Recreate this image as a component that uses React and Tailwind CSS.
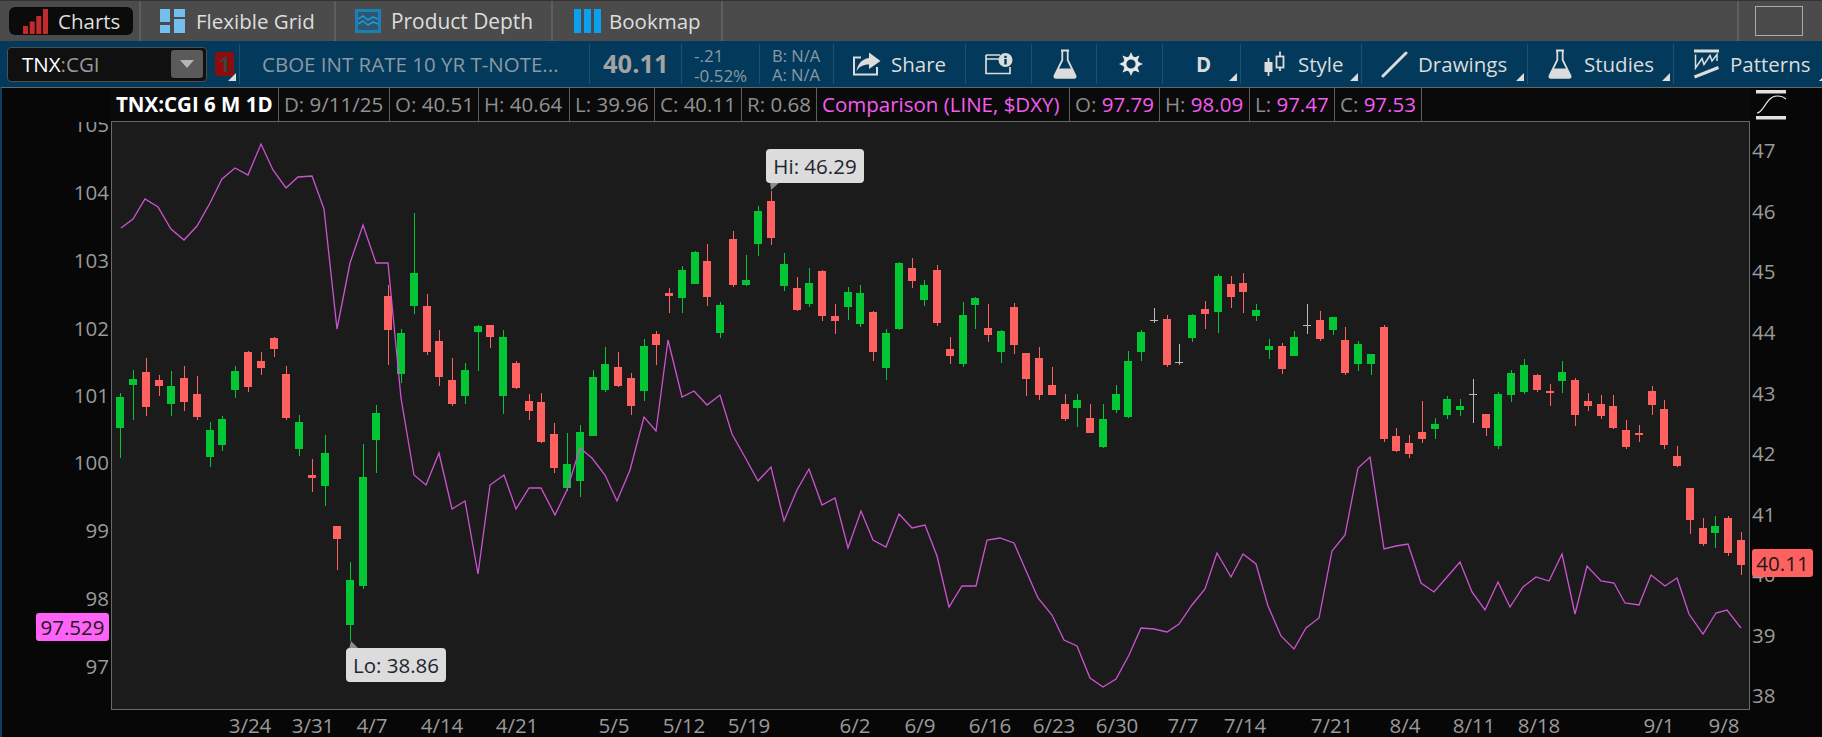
import React from 'react';

// [high, bodyTop, bodyBottom, low, colour]
const candles = [
  [393, 397, 428, 458, 'g'], [370, 379, 385, 420, 'g'], [358, 372, 407, 416, 'r'], [375, 380, 386, 396, 'r'],
  [371, 386, 404, 416, 'g'], [366, 378, 402, 411, 'r'], [376, 394, 417, 420, 'r'], [422, 430, 457, 467, 'g'],
  [416, 419, 445, 451, 'g'], [366, 371, 390, 398, 'g'], [351, 352, 387, 392, 'r'], [352, 361, 368, 375, 'r'],
  [337, 338, 349, 357, 'r'], [366, 374, 418, 420, 'r'], [415, 422, 449, 456, 'g'], [459, 475, 478, 492, 'r'],
  [435, 453, 486, 506, 'g'], [526, 526, 539, 570, 'r'], [562, 580, 625, 641, 'g'], [444, 477, 586, 589, 'g'],
  [405, 413, 440, 473, 'g'], [285, 296, 330, 365, 'r'], [329, 333, 374, 383, 'g'], [213, 273, 306, 314, 'g'],
  [294, 306, 352, 355, 'r'], [330, 341, 377, 386, 'r'], [358, 380, 404, 406, 'r'], [363, 370, 396, 404, 'g'],
  [325, 326, 332, 371, 'g'], [325, 325, 337, 348, 'r'], [330, 337, 396, 414, 'g'], [361, 363, 388, 389, 'r'],
  [394, 401, 411, 420, 'r'], [393, 402, 442, 443, 'r'], [423, 434, 468, 473, 'r'], [433, 464, 488, 491, 'g'],
  [425, 432, 481, 497, 'g'], [370, 377, 436, 436, 'g'], [347, 364, 390, 392, 'g'], [352, 367, 386, 387, 'r'],
  [373, 378, 406, 415, 'r'], [339, 346, 391, 401, 'g'], [331, 334, 345, 365, 'r'], [288, 293, 296, 313, 'r'],
  [266, 270, 298, 313, 'g'], [251, 252, 284, 284, 'g'], [244, 261, 297, 306, 'r'], [302, 305, 333, 338, 'g'],
  [231, 239, 285, 287, 'r'], [255, 280, 285, 286, 'g'], [206, 211, 244, 256, 'g'], [191, 201, 238, 245, 'r'],
  [253, 264, 286, 291, 'g'], [277, 288, 310, 311, 'r'], [268, 283, 304, 307, 'g'], [270, 271, 316, 321, 'r'],
  [304, 316, 321, 334, 'r'], [287, 292, 307, 320, 'g'], [285, 293, 324, 327, 'g'], [311, 312, 352, 361, 'r'],
  [329, 333, 368, 380, 'g'], [262, 263, 329, 330, 'g'], [258, 268, 281, 288, 'r'], [280, 285, 300, 306, 'g'],
  [265, 270, 323, 326, 'r'], [337, 349, 356, 364, 'r'], [302, 315, 364, 367, 'g'], [297, 298, 305, 329, 'g'],
  [304, 328, 335, 342, 'r'], [330, 331, 352, 363, 'g'], [303, 307, 345, 354, 'r'], [353, 353, 379, 396, 'r'],
  [347, 358, 395, 400, 'r'], [367, 385, 395, 395, 'r'], [394, 404, 419, 421, 'r'], [394, 400, 408, 427, 'g'],
  [404, 418, 433, 433, 'r'], [404, 419, 447, 448, 'g'], [385, 394, 410, 413, 'g'], [351, 361, 417, 418, 'g'],
  [330, 332, 352, 361, 'g'], [308, 320, 321, 323, 'w'], [315, 319, 365, 367, 'r'], [344, 362, 363, 365, 'w'],
  [314, 315, 338, 342, 'g'], [301, 309, 314, 329, 'r'], [274, 276, 312, 333, 'g'], [276, 284, 297, 308, 'r'],
  [273, 283, 292, 313, 'r'], [304, 310, 316, 321, 'g'], [339, 346, 350, 359, 'g'], [343, 346, 369, 374, 'r'],
  [331, 337, 356, 356, 'g'], [304, 325, 326, 334, 'w'], [311, 320, 339, 341, 'r'], [317, 317, 330, 335, 'g'],
  [327, 340, 373, 375, 'r'], [341, 344, 364, 371, 'g'], [354, 354, 364, 375, 'g'], [325, 327, 439, 442, 'r'],
  [428, 436, 451, 452, 'r'], [435, 443, 454, 458, 'r'], [401, 432, 439, 443, 'r'], [418, 424, 429, 439, 'g'],
  [396, 399, 415, 419, 'g'], [399, 406, 410, 416, 'g'], [379, 394, 395, 423, 'w'], [414, 414, 428, 436, 'r'],
  [392, 394, 446, 449, 'g'], [370, 373, 395, 402, 'g'], [359, 365, 392, 394, 'g'], [374, 375, 390, 392, 'r'],
  [384, 391, 393, 406, 'r'], [361, 372, 381, 393, 'g'], [378, 380, 415, 426, 'r'], [393, 401, 406, 411, 'r'],
  [395, 404, 416, 419, 'r'], [395, 406, 428, 429, 'r'], [420, 430, 447, 449, 'r'], [425, 433, 435, 442, 'r'],
  [386, 391, 405, 415, 'r'], [400, 409, 445, 449, 'r'], [446, 456, 466, 467, 'r'], [488, 488, 520, 534, 'r'],
  [518, 528, 544, 546, 'r'], [516, 526, 533, 548, 'g'], [516, 518, 553, 556, 'r'], [532, 540, 565, 575, 'r'],
];

const candleColor = { g: '#03c635', r: '#ff6060', w: '#b9b9b9' };

const dxyLine = [
  [121, 228], [133, 219], [145, 199], [158, 207], [171, 229], [184, 240], [197, 226], [210, 203], [222, 179],
  [235, 168], [248, 175], [261, 144], [273, 170], [286, 188], [298, 177], [312, 176], [324, 209], [337, 329],
  [350, 263], [363, 225], [376, 263], [388, 263], [401, 398], [414, 475], [426, 485], [439, 453], [452, 509],
  [465, 501], [478, 574], [490, 485], [504, 475], [516, 509], [529, 488], [541, 488], [555, 515], [567, 490],
  [580, 448], [592, 458], [605, 475], [617, 501], [630, 470], [644, 417], [656, 431], [668, 340], [682, 397],
  [694, 391], [707, 405], [720, 395], [732, 434], [746, 459], [758, 481], [771, 467], [784, 521], [797, 490],
  [809, 469], [822, 505], [835, 498], [848, 548], [861, 511], [873, 540], [886, 547], [899, 514], [912, 528],
  [925, 525], [937, 556], [949, 607], [962, 586], [976, 586], [987, 540], [1000, 538], [1014, 543], [1027, 573],
  [1038, 598], [1052, 615], [1064, 640], [1077, 646], [1090, 678], [1103, 687], [1116, 679], [1129, 655],
  [1141, 628], [1154, 629], [1167, 632], [1179, 624], [1192, 605], [1205, 589], [1217, 553], [1231, 577],
  [1243, 554], [1256, 564], [1268, 606], [1281, 636], [1294, 649], [1306, 628], [1319, 618], [1332, 551],
  [1345, 535], [1358, 468], [1370, 457], [1384, 549], [1396, 546], [1408, 544], [1421, 583], [1434, 592],
  [1447, 577], [1460, 562], [1472, 592], [1485, 610], [1498, 582], [1510, 607], [1523, 587], [1536, 577],
  [1549, 581], [1562, 554], [1575, 614], [1587, 566], [1601, 581], [1614, 583], [1625, 603], [1639, 605],
  [1651, 575], [1665, 586], [1677, 578], [1689, 614], [1703, 634], [1716, 613], [1727, 610], [1741, 628],
];

const leftTicks = [[105, 124], [104, 192], [103, 260], [102, 328], [101, 395], [100, 462], [99, 530], [98, 598], [97, 666]];
const rightTicks = [[47, 150], [46, 211], [45, 271], [44, 332], [43, 393], [42, 453], [41, 514], [40, 574], [39, 635], [38, 695]];
const dateTicks = [
  ['3/24', 250], ['3/31', 313], ['4/7', 372], ['4/14', 442], ['4/21', 517], ['5/5', 614], ['5/12', 684], ['5/19', 749],
  ['6/2', 855], ['6/9', 920], ['6/16', 990], ['6/23', 1054], ['6/30', 1117], ['7/7', 1183], ['7/14', 1245], ['7/21', 1332],
  ['8/4', 1405], ['8/11', 1474], ['8/18', 1539], ['9/1', 1659], ['9/8', 1724],
];

const CornerMark = ({ className }) => (
  <svg width="8" height="8" viewBox="0 0 8 8" className={`absolute ${className}`}>
    <polygon points="8,0 8,8 0,8" fill="#dcdcdc" />
  </svg>
);

const FlaskIcon = ({ className }) => (
  <svg width="24" height="30" viewBox="0 0 24 30" fill="none" className={className}>
    <path d="M8 1.5H16M9.3 2V11L1.6 26.6Q0.8 28.8 3 28.8H21Q23.2 28.8 22.4 26.6L14.7 11V2" stroke="#dcdcdc" strokeWidth="1.8" />
    <path d="M5.5 19.5H18.5L22.4 26.6Q23.2 28.8 21 28.8H3Q0.8 28.8 1.6 26.6Z" fill="#dcdcdc" />
  </svg>
);

const ShareIcon = () => (
  <svg width="29" height="24" viewBox="0 0 29 24" fill="none">
    <path d="M9 5.5H2V22.5H25V15" stroke="#dcdcdc" strokeWidth="2" />
    <path d="M17 0.5L28.5 9L17 17V12.5C11 12.5 7 14.5 4.5 19.5C5.5 12 10 7 17 6Z" fill="#dcdcdc" />
  </svg>
);

const InfoWindowIcon = () => (
  <svg width="28" height="22" viewBox="0 0 28 22" fill="none">
    <path d="M1 2H15M1 6H14M1 2V20.5H25V14" stroke="#dcdcdc" strokeWidth="1.7" />
    <circle cx="20.5" cy="7" r="7" fill="#dcdcdc" />
    <rect x="19.3" y="2.8" width="2.4" height="2.2" fill="#03395a" />
    <rect x="19.3" y="6" width="2.4" height="5.5" fill="#03395a" />
  </svg>
);

const GearIcon = () => {
  const rays = [0, 45, 90, 135, 180, 225, 270, 315];
  return (
    <svg width="26" height="26" viewBox="0 0 26 26" fill="none">
      {rays.map((deg) => (
        <path key={deg} d="M13 1L15.2 6H10.8Z" fill="#e6e6e6" transform={`rotate(${deg} 13 13)`} />
      ))}
      <circle cx="13" cy="13" r="6.2" stroke="#e6e6e6" strokeWidth="3.2" />
    </svg>
  );
};

const StyleIcon = () => (
  <svg width="21" height="26" viewBox="0 0 21 26" fill="none">
    <path d="M4.5 7V25M16 0.5V20" stroke="#dcdcdc" strokeWidth="1.8" />
    <rect x="0.5" y="11" width="8" height="10" fill="#dcdcdc" />
    <rect x="12.5" y="5.5" width="7" height="11" fill="#03395a" stroke="#dcdcdc" strokeWidth="1.8" />
  </svg>
);

const PatternsIcon = () => (
  <svg width="27" height="30" viewBox="0 0 27 30" fill="none">
    <rect x="1" y="0.5" width="25" height="3" fill="#dcdcdc" />
    <path d="M2.5 5.5V19L9 9.5L11 15.5L17 6.5L19 12L24 5.5V12" stroke="#dcdcdc" strokeWidth="1.5" />
    <path d="M1.5 28L25.5 18.5" stroke="#dcdcdc" strokeWidth="3" />
  </svg>
);

const Candle = ({ data, i }) => {
  const [hi, top, bottom, lo, c] = data;
  const x = Math.round(120.4 + 12.76 * i);
  const fill = candleColor[c];
  return (
    <g fill={fill} shapeRendering="crispEdges">
      <rect x={x} y={hi} width="1" height={lo - hi} />
      <rect x={x - 4} y={top} width="8" height={Math.max(bottom - top, 1)} />
    </g>
  );
};

const InfoCell = ({ className, children }) => (
  <div className={`flex items-center h-full border-r border-[#5e5e5e] pl-[5px] whitespace-nowrap ${className}`}>
    {children}
  </div>
);

const Quote = ({ label, value, valueClass = 'text-[#929292]' }) => (
  <>
    <span className="text-[#8c8c8c]">{label}&nbsp;</span>
    <span className={valueClass}>{value}</span>
  </>
);

export default function App() {
  return (
    <div className="w-[1822px] h-[737px] overflow-hidden flex flex-col bg-[#070707] font-['Open_Sans',sans-serif] text-[20.5px] leading-none">
      {/* tabs */}
      <div className="h-[41px] flex bg-[#4b4b4b] text-[#dedede] border-t border-[#333]">
        <div className="w-[141px] h-full flex items-center pl-[9px] border-r-2 border-[#5e5e5e]">
          <div className="w-[124px] h-[28px] rounded-[6px] bg-[#0b0b0b] flex items-center pl-[14px] gap-[10px]">
            <svg width="25" height="25" viewBox="0 0 25 25" fill="#c22b2b">
              <rect x="0" y="17" width="5" height="8" />
              <rect x="6.7" y="12.5" width="5" height="12.5" />
              <rect x="13.3" y="7" width="5" height="18" />
              <rect x="20" y="0" width="5" height="25" />
            </svg>
            <span>Charts</span>
          </div>
        </div>
        <div className="w-[195px] h-full flex items-center pl-[19px] gap-[11px] border-r-2 border-[#5e5e5e]">
          <svg width="25" height="24" viewBox="0 0 25 24" fill="#74bfee">
            <rect x="0" y="0" width="10" height="13" />
            <rect x="0" y="16" width="10" height="8" />
            <rect x="14" y="0" width="11" height="8" />
            <rect x="14" y="10" width="11" height="14" />
          </svg>
          <span>Flexible Grid</span>
        </div>
        <div className="w-[217px] h-full flex items-center pl-[19px] gap-[10px] border-r-2 border-[#5e5e5e]">
          <svg width="26" height="24" viewBox="0 0 26 24" fill="none">
            <rect x="0" y="0" width="26" height="24" fill="#1a80b8" />
            <rect x="3" y="3" width="20" height="18" fill="#2f566e" />
            <path d="M3 10L8 7L13 11L18 8L23 10M3 15L8 12L13 16L18 13L23 15" stroke="#1a9ad8" strokeWidth="1.6" />
          </svg>
          <span className="text-[20.9px]">Product Depth</span>
        </div>
        <div className="w-[170px] h-full flex items-center pl-[21px] gap-[8px] border-r-2 border-[#5e5e5e]">
          <svg width="27" height="24" viewBox="0 0 27 24" fill="#0aa0ee">
            <rect x="0" y="0" width="7" height="24" />
            <rect x="10" y="0" width="7" height="24" />
            <rect x="20" y="0" width="7" height="24" />
          </svg>
          <span>Bookmap</span>
        </div>
        <div className="flex-1 flex justify-end">
          <div className="w-[85px] h-full border-l-2 border-[#5e5e5e] pl-[16px] pt-[5px]">
            <div className="w-[48px] h-[30px] border border-[#ababab]" />
          </div>
        </div>
      </div>

      {/* toolbar */}
      <div className="h-[46px] flex items-center bg-[#03395a] text-[#dcdcdc]">
        <div className="relative w-[240px] h-[40px] flex items-center pl-[7px] border-r border-[#1c5274]">
          <div className="w-[200px] h-[35px] rounded-[4px] bg-[#101010] border border-[#4f4f4f] flex items-center justify-between pl-[14px] pr-[3px]">
            <span className="text-white">TNX<span className="text-[#9a9a9a]">:CGI</span></span>
            <div className="w-[32px] h-[28px] rounded-[3px] bg-[#5a5a5a] flex items-center justify-center">
              <svg width="14" height="8" viewBox="0 0 14 8"><polygon points="0,0 14,0 7,8" fill="#b5b5b5" /></svg>
            </div>
          </div>
          <div className="w-[19px] h-[24px] ml-[8px] rounded-[3px] bg-[#8b0d0d] text-[#3f3f3f] font-bold flex items-center justify-center">1</div>
          <CornerMark className="left-[228px] bottom-[3px]" />
        </div>
        <div className="w-[350px] h-[40px] flex items-center pl-[22px] border-r border-[#1c5274] text-[#8b99a4] whitespace-nowrap">
          CBOE INT RATE 10 YR T-NOTE...
        </div>
        <div className="w-[92px] h-[40px] flex items-center pl-[13px] border-r border-[#1c5274] text-[#a3a3a3] text-[25.5px] font-bold">40.11</div>
        <div className="w-[78px] h-[40px] flex flex-col justify-center gap-[3px] pl-[12px] pt-[3px] border-r border-[#1c5274] text-[#8b99a4] text-[17px]">
          <span>-.21</span>
          <span>-0.52%</span>
        </div>
        <div className="w-[74px] h-[40px] flex flex-col justify-center gap-[3px] pl-[12px] pt-[3px] border-r border-[#1c5274] text-[#8b99a4] text-[16.5px]">
          <span>B: N/A</span>
          <span>A: N/A</span>
        </div>
        <div className="w-[132px] h-[40px] flex items-center pl-[18px] gap-[10px] border-r border-[#1c5274]">
          <ShareIcon />
          <span>Share</span>
        </div>
        <div className="w-[66px] h-[40px] flex items-center pl-[19px] border-r border-[#1c5274]">
          <InfoWindowIcon />
        </div>
        <div className="w-[65px] h-[40px] flex items-center pl-[21px] border-r border-[#1c5274]">
          <FlaskIcon />
        </div>
        <div className="w-[66px] h-[40px] flex items-center pl-[21px] border-r border-[#1c5274]">
          <GearIcon />
        </div>
        <div className="relative w-[78px] h-[40px] flex items-center pl-[33px] border-r border-[#1c5274] font-bold">
          D
          <CornerMark className="right-[3px] bottom-[3px]" />
        </div>
        <div className="relative w-[121px] h-[40px] flex items-center pl-[23px] gap-[13px] border-r border-[#1c5274]">
          <StyleIcon />
          <span>Style</span>
          <CornerMark className="right-[3px] bottom-[3px]" />
        </div>
        <div className="relative w-[166px] h-[40px] flex items-center pl-[19px] gap-[10px] border-r border-[#1c5274]">
          <svg width="27" height="27" viewBox="0 0 27 27" fill="none">
            <path d="M2 25L25 2" stroke="#dcdcdc" strokeWidth="3" strokeLinecap="round" />
          </svg>
          <span>Drawings</span>
          <CornerMark className="right-[3px] bottom-[3px]" />
        </div>
        <div className="relative w-[146px] h-[40px] flex items-center pl-[20px] gap-[12px] border-r border-[#1c5274]">
          <FlaskIcon />
          <span>Studies</span>
          <CornerMark className="right-[3px] bottom-[3px]" />
        </div>
        <div className="relative flex-1 h-[40px] flex items-center pl-[19px] gap-[10px]">
          <PatternsIcon />
          <span>Patterns</span>
          <CornerMark className="-right-[5px] bottom-[3px]" />
        </div>
      </div>

      {/* chart area */}
      <div className="flex-1 flex border-t border-[#666] border-l-2 border-l-[#0f3f60]">
        <div className="relative w-[109px] pt-[34px]">
          <svg width="109" height="588" viewBox="2 122 109 588" fill="#9a9a9a" className="block">
            {leftTicks.map(([label, y]) => (
              <text key={label} x="109" y={y + 7.5} textAnchor="end">{label}</text>
            ))}
          </svg>
          <div className="absolute left-[34px] top-[525px] w-[73px] h-[28px] rounded-[3px] bg-[#ff62f6] text-[#1a1a1a] flex items-center justify-center">97.529</div>
        </div>

        <div className="w-[1639px] flex flex-col">
          <div className="h-[34px] flex border-b border-[#666] bg-[#0a0a0a]">
            <InfoCell className="w-[168px] font-bold text-white pl-[4px]">TNX:CGI 6 M 1D</InfoCell>
            <InfoCell className="w-[111px]"><Quote label="D:" value="9/11/25" /></InfoCell>
            <InfoCell className="w-[89px]"><Quote label="O:" value="40.51" /></InfoCell>
            <InfoCell className="w-[91px]"><Quote label="H:" value="40.64" /></InfoCell>
            <InfoCell className="w-[85px]"><Quote label="L:" value="39.96" /></InfoCell>
            <InfoCell className="w-[87px]"><Quote label="C:" value="40.11" /></InfoCell>
            <InfoCell className="w-[75px]"><Quote label="R:" value="0.68" /></InfoCell>
            <InfoCell className="w-[253px] text-[#f45cf0]">Comparison (LINE, $DXY)</InfoCell>
            <InfoCell className="w-[90px]"><Quote label="O:" value="97.79" valueClass="text-[#f45cf0]" /></InfoCell>
            <InfoCell className="w-[90px]"><Quote label="H:" value="98.09" valueClass="text-[#f45cf0]" /></InfoCell>
            <InfoCell className="w-[85px]"><Quote label="L:" value="97.47" valueClass="text-[#f45cf0]" /></InfoCell>
            <InfoCell className="w-[87px]"><Quote label="C:" value="97.53" valueClass="text-[#f45cf0]" /></InfoCell>
          </div>

          <div className="relative h-[588px] bg-[#1b1b1b] border-l border-r border-b border-[#6a6a6a]">
            <svg width="1637" height="587" viewBox="112 122 1637 587" className="block">
              {candles.map((c, i) => <Candle key={i} data={c} i={i} />)}
              <polyline
                points={dxyLine.map((p) => p.join(',')).join(' ')}
                fill="none"
                stroke="#cf52d2"
                strokeWidth="1.3"
              />
              <polygon points="771,190 770,182 780,182" fill="#8c8c8c" />
              <polygon points="351,641 349,649 359,649" fill="#8c8c8c" />
            </svg>
            <div className="absolute left-[654px] top-[27px] w-[98px] h-[34px] rounded-[4px] bg-[#dcdcdc] text-[#1c2530] flex items-center justify-center">Hi: 46.29</div>
            <div className="absolute left-[234px] top-[526px] w-[100px] h-[34px] rounded-[4px] bg-[#dcdcdc] text-[#1c2530] flex items-center justify-center">Lo: 38.86</div>
          </div>

          <svg width="1639" height="27" viewBox="111 710 1639 27" fill="#9a9a9a" className="block">
            {dateTicks.map(([label, x]) => (
              <text key={label} x={x} y="733" textAnchor="middle">{label}</text>
            ))}
          </svg>
        </div>

        <div className="relative flex-1">
          <div className="h-[34px] pl-[6px] pt-[2px]">
            <svg width="30" height="30" viewBox="0 0 30 30" fill="none">
              <rect x="0" y="0" width="30" height="3.5" fill="#e2e2e2" />
              <rect x="0" y="26" width="30" height="3.5" fill="#e2e2e2" />
              <path d="M1 23C8 23 10 6 21 6C26 6 28 7 30 9" stroke="#e2e2e2" strokeWidth="1.2" />
            </svg>
          </div>
          <svg width="72" height="588" viewBox="1750 122 72 588" fill="#9a9a9a" className="block">
            {rightTicks.map(([label, y]) => (
              <text key={label} x="1752" y={y + 7.5}>{label}</text>
            ))}
          </svg>
          <div className="absolute left-[2px] top-[461px] w-[61px] h-[28px] rounded-[3px] bg-[#ff6060] text-[#1a1a1a] flex items-center justify-center">40.11</div>
        </div>
      </div>
    </div>
  );
}
